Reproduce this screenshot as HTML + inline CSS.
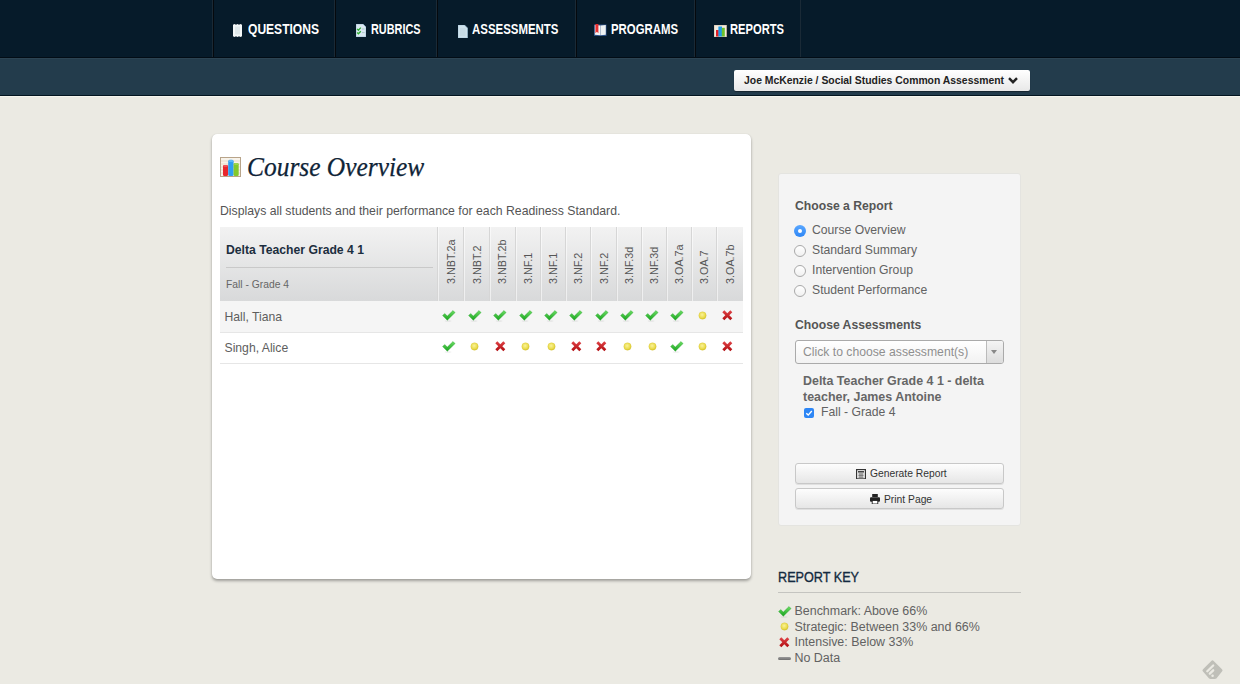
<!DOCTYPE html>
<html><head><meta charset="utf-8">
<style>
*{box-sizing:border-box;margin:0;padding:0}
html,body{width:1240px;height:684px;overflow:hidden}
body{background:#ebeae3;font-family:"Liberation Sans",sans-serif;position:relative;color:#666}
.a{position:absolute;white-space:nowrap}
svg{display:block}
#nav{position:absolute;left:0;top:0;width:1240px;height:58px;background:#061b2a;border-bottom:1px solid #020d16}
#sub{position:absolute;left:0;top:58px;width:1240px;height:39px;background:#233c4c;border-top:1px solid #2c4453;border-bottom:1px solid #f6f6ee;box-shadow:inset 0 -1px 0 #031520}
.sep{position:absolute;top:0;width:2px;height:57px;border-left:1px solid #1a2a36;border-right:1px solid #05090d}
.nt{position:absolute;top:21px;font-weight:bold;font-size:14px;line-height:17px;color:#fff;transform-origin:0 0;white-space:nowrap}
#dd{position:absolute;left:734px;top:70px;width:296px;height:21px;border-radius:2px;background:linear-gradient(#ffffff,#e8e8e8);box-shadow:0 1px 1px rgba(0,0,0,.4)}
#main{position:absolute;left:212px;top:134px;width:539px;height:445px;background:#fff;border-radius:5px;box-shadow:0 2px 3px rgba(0,0,0,.32),0 0 1px rgba(0,0,0,.15)}
#right{position:absolute;left:778px;top:173px;width:243px;height:353px;background:#f4f4f4;border:1px solid #e4e4e0;border-radius:3px}
.th{position:absolute;left:220px;top:227px;width:523px;height:74px;background:linear-gradient(#f2f2f2,#d8d9da)}
.vs{position:absolute;top:227px;width:2px;height:74px;border-left:1px solid #d6d6d6;border-right:1px solid rgba(255,255,255,.55)}
.ch{position:absolute;font-size:10.8px;line-height:12px;color:#555;transform-origin:0 0;transform:rotate(-90deg)}
.r1{position:absolute;left:220px;top:301px;width:523px;height:32px;background:#f5f5f5;border-bottom:1px solid #e6e6e6}
.r2{position:absolute;left:220px;top:333px;width:523px;height:31px;background:#fff;border-bottom:1px solid #e6e6e6}
.ic{position:absolute}
.lbl{font-size:12.2px;line-height:14px;color:#626262}
.btn{position:absolute;left:795px;width:209px;height:21px;border:1px solid #c8c8c8;border-radius:3px;background:linear-gradient(#fdfdfd,#e6e6e6);box-shadow:0 1px 0 rgba(0,0,0,.08)}
</style></head><body>
<div id="nav">
  <div class="sep" style="left:212px"></div>
  <div class="sep" style="left:334px"></div>
  <div class="sep" style="left:436px"></div>
  <div class="sep" style="left:575px"></div>
  <div class="sep" style="left:694px"></div>
  <div class="sep" style="left:800px;width:1px;border-right:0"></div>
  <div class="nt" style="left:248px;transform:scaleX(.861)">QUESTIONS</div>
  <div class="nt" style="left:371px;transform:scaleX(.776)">RUBRICS</div>
  <div class="nt" style="left:472px;transform:scaleX(.817)">ASSESSMENTS</div>
  <div class="nt" style="left:611px;transform:scaleX(.8125)">PROGRAMS</div>
  <div class="nt" style="left:730px;transform:scaleX(.798)">REPORTS</div>
</div>
<div id="sub"></div>
<div id="dd"></div>
<div class="a" style="left:744px;top:74px;font-size:10.4px;line-height:14px;font-weight:bold;color:#222">Joe McKenzie / Social Studies Common Assessment</div>
<div id="main"></div>
<div class="a" style="left:246.5px;top:152px;font-family:'Liberation Serif',serif;font-style:italic;font-size:27px;line-height:30px;color:#0f2437;transform-origin:0 0;transform:scaleX(.942);-webkit-text-stroke:.25px #0f2437">Course Overview</div>
<div class="a" style="left:220px;top:204px;font-size:12.25px;line-height:15px;color:#555">Displays all students and their performance for each Readiness Standard.</div>
<div class="th"></div>

<div class="vs" style="left:437px"></div>
<div class="vs" style="left:463px"></div>
<div class="vs" style="left:489px"></div>
<div class="vs" style="left:515px"></div>
<div class="vs" style="left:540px"></div>
<div class="vs" style="left:565px"></div>
<div class="vs" style="left:590px"></div>
<div class="vs" style="left:616px"></div>
<div class="vs" style="left:641px"></div>
<div class="vs" style="left:666px"></div>
<div class="vs" style="left:691px"></div>
<div class="vs" style="left:716px"></div>
<div class="a" style="left:226px;top:267px;width:207px;height:1px;background:#c9c9c9"></div>
<div class="a" style="left:226px;top:243px;font-size:12.2px;line-height:15px;font-weight:bold;color:#1c2e3e">Delta Teacher Grade 4 1</div>
<div class="a" style="left:226px;top:278px;font-size:10.3px;line-height:13px;color:#666">Fall - Grade 4</div>
<div class="ch" style="left:444.6px;top:284px">3.NBT.2a</div>
<div class="ch" style="left:470.6px;top:284px">3.NBT.2</div>
<div class="ch" style="left:496.3px;top:284px">3.NBT.2b</div>
<div class="ch" style="left:521.9px;top:284px">3.NF.1</div>
<div class="ch" style="left:547.0px;top:284px">3.NF.1</div>
<div class="ch" style="left:572.0px;top:284px">3.NF.2</div>
<div class="ch" style="left:597.5px;top:284px">3.NF.2</div>
<div class="ch" style="left:623.0px;top:284px">3.NF.3d</div>
<div class="ch" style="left:648.0px;top:284px">3.NF.3d</div>
<div class="ch" style="left:673.0px;top:284px">3.OA.7a</div>
<div class="ch" style="left:698.1px;top:284px">3.OA.7</div>
<div class="ch" style="left:723.7px;top:284px">3.OA.7b</div>
<div class="r1"></div><div class="r2"></div>
<div class="a lbl" style="left:224.5px;top:310px;font-size:12.2px;color:#5e5e5e">Hall, Tiana</div>
<div class="a lbl" style="left:224.5px;top:341px;font-size:12.2px;color:#5e5e5e">Singh, Alice</div>
<div class="ic" style="left:441.6px;top:310px"><svg width="14" height="12" viewBox="0 0 14 12"><defs><linearGradient id="gc" x1="0" y1="0" x2="0" y2="1"><stop offset="0" stop-color="#6ede66"/><stop offset="1" stop-color="#16a21c"/></linearGradient></defs><ellipse cx="6" cy="11" rx="3.5" ry="0.8" fill="rgba(0,0,0,.07)"/><path d="M0.6 5.6 L2.7 3.5 L5.3 6.1 L11 0.5 L13.1 2.6 L5.3 10.3 Z" fill="url(#gc)" stroke="#1a9c20" stroke-width=".35" stroke-linejoin="round"/></svg></div>
<div class="ic" style="left:467.6px;top:310px"><svg width="14" height="12" viewBox="0 0 14 12"><defs><linearGradient id="gc" x1="0" y1="0" x2="0" y2="1"><stop offset="0" stop-color="#6ede66"/><stop offset="1" stop-color="#16a21c"/></linearGradient></defs><ellipse cx="6" cy="11" rx="3.5" ry="0.8" fill="rgba(0,0,0,.07)"/><path d="M0.6 5.6 L2.7 3.5 L5.3 6.1 L11 0.5 L13.1 2.6 L5.3 10.3 Z" fill="url(#gc)" stroke="#1a9c20" stroke-width=".35" stroke-linejoin="round"/></svg></div>
<div class="ic" style="left:493.3px;top:310px"><svg width="14" height="12" viewBox="0 0 14 12"><defs><linearGradient id="gc" x1="0" y1="0" x2="0" y2="1"><stop offset="0" stop-color="#6ede66"/><stop offset="1" stop-color="#16a21c"/></linearGradient></defs><ellipse cx="6" cy="11" rx="3.5" ry="0.8" fill="rgba(0,0,0,.07)"/><path d="M0.6 5.6 L2.7 3.5 L5.3 6.1 L11 0.5 L13.1 2.6 L5.3 10.3 Z" fill="url(#gc)" stroke="#1a9c20" stroke-width=".35" stroke-linejoin="round"/></svg></div>
<div class="ic" style="left:518.9px;top:310px"><svg width="14" height="12" viewBox="0 0 14 12"><defs><linearGradient id="gc" x1="0" y1="0" x2="0" y2="1"><stop offset="0" stop-color="#6ede66"/><stop offset="1" stop-color="#16a21c"/></linearGradient></defs><ellipse cx="6" cy="11" rx="3.5" ry="0.8" fill="rgba(0,0,0,.07)"/><path d="M0.6 5.6 L2.7 3.5 L5.3 6.1 L11 0.5 L13.1 2.6 L5.3 10.3 Z" fill="url(#gc)" stroke="#1a9c20" stroke-width=".35" stroke-linejoin="round"/></svg></div>
<div class="ic" style="left:544.0px;top:310px"><svg width="14" height="12" viewBox="0 0 14 12"><defs><linearGradient id="gc" x1="0" y1="0" x2="0" y2="1"><stop offset="0" stop-color="#6ede66"/><stop offset="1" stop-color="#16a21c"/></linearGradient></defs><ellipse cx="6" cy="11" rx="3.5" ry="0.8" fill="rgba(0,0,0,.07)"/><path d="M0.6 5.6 L2.7 3.5 L5.3 6.1 L11 0.5 L13.1 2.6 L5.3 10.3 Z" fill="url(#gc)" stroke="#1a9c20" stroke-width=".35" stroke-linejoin="round"/></svg></div>
<div class="ic" style="left:569.0px;top:310px"><svg width="14" height="12" viewBox="0 0 14 12"><defs><linearGradient id="gc" x1="0" y1="0" x2="0" y2="1"><stop offset="0" stop-color="#6ede66"/><stop offset="1" stop-color="#16a21c"/></linearGradient></defs><ellipse cx="6" cy="11" rx="3.5" ry="0.8" fill="rgba(0,0,0,.07)"/><path d="M0.6 5.6 L2.7 3.5 L5.3 6.1 L11 0.5 L13.1 2.6 L5.3 10.3 Z" fill="url(#gc)" stroke="#1a9c20" stroke-width=".35" stroke-linejoin="round"/></svg></div>
<div class="ic" style="left:594.5px;top:310px"><svg width="14" height="12" viewBox="0 0 14 12"><defs><linearGradient id="gc" x1="0" y1="0" x2="0" y2="1"><stop offset="0" stop-color="#6ede66"/><stop offset="1" stop-color="#16a21c"/></linearGradient></defs><ellipse cx="6" cy="11" rx="3.5" ry="0.8" fill="rgba(0,0,0,.07)"/><path d="M0.6 5.6 L2.7 3.5 L5.3 6.1 L11 0.5 L13.1 2.6 L5.3 10.3 Z" fill="url(#gc)" stroke="#1a9c20" stroke-width=".35" stroke-linejoin="round"/></svg></div>
<div class="ic" style="left:620.0px;top:310px"><svg width="14" height="12" viewBox="0 0 14 12"><defs><linearGradient id="gc" x1="0" y1="0" x2="0" y2="1"><stop offset="0" stop-color="#6ede66"/><stop offset="1" stop-color="#16a21c"/></linearGradient></defs><ellipse cx="6" cy="11" rx="3.5" ry="0.8" fill="rgba(0,0,0,.07)"/><path d="M0.6 5.6 L2.7 3.5 L5.3 6.1 L11 0.5 L13.1 2.6 L5.3 10.3 Z" fill="url(#gc)" stroke="#1a9c20" stroke-width=".35" stroke-linejoin="round"/></svg></div>
<div class="ic" style="left:645.0px;top:310px"><svg width="14" height="12" viewBox="0 0 14 12"><defs><linearGradient id="gc" x1="0" y1="0" x2="0" y2="1"><stop offset="0" stop-color="#6ede66"/><stop offset="1" stop-color="#16a21c"/></linearGradient></defs><ellipse cx="6" cy="11" rx="3.5" ry="0.8" fill="rgba(0,0,0,.07)"/><path d="M0.6 5.6 L2.7 3.5 L5.3 6.1 L11 0.5 L13.1 2.6 L5.3 10.3 Z" fill="url(#gc)" stroke="#1a9c20" stroke-width=".35" stroke-linejoin="round"/></svg></div>
<div class="ic" style="left:670.0px;top:310px"><svg width="14" height="12" viewBox="0 0 14 12"><defs><linearGradient id="gc" x1="0" y1="0" x2="0" y2="1"><stop offset="0" stop-color="#6ede66"/><stop offset="1" stop-color="#16a21c"/></linearGradient></defs><ellipse cx="6" cy="11" rx="3.5" ry="0.8" fill="rgba(0,0,0,.07)"/><path d="M0.6 5.6 L2.7 3.5 L5.3 6.1 L11 0.5 L13.1 2.6 L5.3 10.3 Z" fill="url(#gc)" stroke="#1a9c20" stroke-width=".35" stroke-linejoin="round"/></svg></div>
<div class="ic" style="left:697.6px;top:310.5px"><svg width="9" height="9" viewBox="0 0 9 9"><defs><radialGradient id="gd" cx=".45" cy=".4" r=".6"><stop offset="0" stop-color="#faf29a"/><stop offset=".7" stop-color="#eadc4c"/><stop offset="1" stop-color="#d6c22a"/></radialGradient></defs><circle cx="4.5" cy="4.5" r="3.7" fill="url(#gd)" stroke="#d8c83a" stroke-width=".35"/></svg></div>
<div class="ic" style="left:722.2px;top:309.5px"><svg width="11" height="11" viewBox="0 0 11 11"><defs><linearGradient id="gx" x1="0" y1="0" x2="0" y2="1"><stop offset="0" stop-color="#e04448"/><stop offset="1" stop-color="#b00c10"/></linearGradient></defs><path d="M0.3 2.3 L2.3 0.3 L5.3 3.3 L8.3 0.3 L10.3 2.3 L7.3 5.3 L10.3 8.3 L8.3 10.3 L5.3 7.3 L2.3 10.3 L0.3 8.3 L3.3 5.3 Z" fill="url(#gx)"/></svg></div>
<div class="ic" style="left:441.6px;top:341px"><svg width="14" height="12" viewBox="0 0 14 12"><defs><linearGradient id="gc" x1="0" y1="0" x2="0" y2="1"><stop offset="0" stop-color="#6ede66"/><stop offset="1" stop-color="#16a21c"/></linearGradient></defs><ellipse cx="6" cy="11" rx="3.5" ry="0.8" fill="rgba(0,0,0,.07)"/><path d="M0.6 5.6 L2.7 3.5 L5.3 6.1 L11 0.5 L13.1 2.6 L5.3 10.3 Z" fill="url(#gc)" stroke="#1a9c20" stroke-width=".35" stroke-linejoin="round"/></svg></div>
<div class="ic" style="left:470.1px;top:341.5px"><svg width="9" height="9" viewBox="0 0 9 9"><defs><radialGradient id="gd" cx=".45" cy=".4" r=".6"><stop offset="0" stop-color="#faf29a"/><stop offset=".7" stop-color="#eadc4c"/><stop offset="1" stop-color="#d6c22a"/></radialGradient></defs><circle cx="4.5" cy="4.5" r="3.7" fill="url(#gd)" stroke="#d8c83a" stroke-width=".35"/></svg></div>
<div class="ic" style="left:494.8px;top:340.5px"><svg width="11" height="11" viewBox="0 0 11 11"><defs><linearGradient id="gx" x1="0" y1="0" x2="0" y2="1"><stop offset="0" stop-color="#e04448"/><stop offset="1" stop-color="#b00c10"/></linearGradient></defs><path d="M0.3 2.3 L2.3 0.3 L5.3 3.3 L8.3 0.3 L10.3 2.3 L7.3 5.3 L10.3 8.3 L8.3 10.3 L5.3 7.3 L2.3 10.3 L0.3 8.3 L3.3 5.3 Z" fill="url(#gx)"/></svg></div>
<div class="ic" style="left:521.4px;top:341.5px"><svg width="9" height="9" viewBox="0 0 9 9"><defs><radialGradient id="gd" cx=".45" cy=".4" r=".6"><stop offset="0" stop-color="#faf29a"/><stop offset=".7" stop-color="#eadc4c"/><stop offset="1" stop-color="#d6c22a"/></radialGradient></defs><circle cx="4.5" cy="4.5" r="3.7" fill="url(#gd)" stroke="#d8c83a" stroke-width=".35"/></svg></div>
<div class="ic" style="left:546.5px;top:341.5px"><svg width="9" height="9" viewBox="0 0 9 9"><defs><radialGradient id="gd" cx=".45" cy=".4" r=".6"><stop offset="0" stop-color="#faf29a"/><stop offset=".7" stop-color="#eadc4c"/><stop offset="1" stop-color="#d6c22a"/></radialGradient></defs><circle cx="4.5" cy="4.5" r="3.7" fill="url(#gd)" stroke="#d8c83a" stroke-width=".35"/></svg></div>
<div class="ic" style="left:570.5px;top:340.5px"><svg width="11" height="11" viewBox="0 0 11 11"><defs><linearGradient id="gx" x1="0" y1="0" x2="0" y2="1"><stop offset="0" stop-color="#e04448"/><stop offset="1" stop-color="#b00c10"/></linearGradient></defs><path d="M0.3 2.3 L2.3 0.3 L5.3 3.3 L8.3 0.3 L10.3 2.3 L7.3 5.3 L10.3 8.3 L8.3 10.3 L5.3 7.3 L2.3 10.3 L0.3 8.3 L3.3 5.3 Z" fill="url(#gx)"/></svg></div>
<div class="ic" style="left:596.0px;top:340.5px"><svg width="11" height="11" viewBox="0 0 11 11"><defs><linearGradient id="gx" x1="0" y1="0" x2="0" y2="1"><stop offset="0" stop-color="#e04448"/><stop offset="1" stop-color="#b00c10"/></linearGradient></defs><path d="M0.3 2.3 L2.3 0.3 L5.3 3.3 L8.3 0.3 L10.3 2.3 L7.3 5.3 L10.3 8.3 L8.3 10.3 L5.3 7.3 L2.3 10.3 L0.3 8.3 L3.3 5.3 Z" fill="url(#gx)"/></svg></div>
<div class="ic" style="left:622.5px;top:341.5px"><svg width="9" height="9" viewBox="0 0 9 9"><defs><radialGradient id="gd" cx=".45" cy=".4" r=".6"><stop offset="0" stop-color="#faf29a"/><stop offset=".7" stop-color="#eadc4c"/><stop offset="1" stop-color="#d6c22a"/></radialGradient></defs><circle cx="4.5" cy="4.5" r="3.7" fill="url(#gd)" stroke="#d8c83a" stroke-width=".35"/></svg></div>
<div class="ic" style="left:647.5px;top:341.5px"><svg width="9" height="9" viewBox="0 0 9 9"><defs><radialGradient id="gd" cx=".45" cy=".4" r=".6"><stop offset="0" stop-color="#faf29a"/><stop offset=".7" stop-color="#eadc4c"/><stop offset="1" stop-color="#d6c22a"/></radialGradient></defs><circle cx="4.5" cy="4.5" r="3.7" fill="url(#gd)" stroke="#d8c83a" stroke-width=".35"/></svg></div>
<div class="ic" style="left:670.0px;top:341px"><svg width="14" height="12" viewBox="0 0 14 12"><defs><linearGradient id="gc" x1="0" y1="0" x2="0" y2="1"><stop offset="0" stop-color="#6ede66"/><stop offset="1" stop-color="#16a21c"/></linearGradient></defs><ellipse cx="6" cy="11" rx="3.5" ry="0.8" fill="rgba(0,0,0,.07)"/><path d="M0.6 5.6 L2.7 3.5 L5.3 6.1 L11 0.5 L13.1 2.6 L5.3 10.3 Z" fill="url(#gc)" stroke="#1a9c20" stroke-width=".35" stroke-linejoin="round"/></svg></div>
<div class="ic" style="left:697.6px;top:341.5px"><svg width="9" height="9" viewBox="0 0 9 9"><defs><radialGradient id="gd" cx=".45" cy=".4" r=".6"><stop offset="0" stop-color="#faf29a"/><stop offset=".7" stop-color="#eadc4c"/><stop offset="1" stop-color="#d6c22a"/></radialGradient></defs><circle cx="4.5" cy="4.5" r="3.7" fill="url(#gd)" stroke="#d8c83a" stroke-width=".35"/></svg></div>
<div class="ic" style="left:722.2px;top:340.5px"><svg width="11" height="11" viewBox="0 0 11 11"><defs><linearGradient id="gx" x1="0" y1="0" x2="0" y2="1"><stop offset="0" stop-color="#e04448"/><stop offset="1" stop-color="#b00c10"/></linearGradient></defs><path d="M0.3 2.3 L2.3 0.3 L5.3 3.3 L8.3 0.3 L10.3 2.3 L7.3 5.3 L10.3 8.3 L8.3 10.3 L5.3 7.3 L2.3 10.3 L0.3 8.3 L3.3 5.3 Z" fill="url(#gx)"/></svg></div>
<div id="right"></div>
<div class="a" style="left:795px;top:199px;font-size:12.2px;line-height:15px;font-weight:bold;color:#555">Choose a Report</div>
<div class="a" style="left:794px;top:225px;width:12px;height:12px;border-radius:50%;background:linear-gradient(#5aa7ff,#2d86f5)"><div style="position:absolute;left:4px;top:4px;width:4px;height:4px;border-radius:50%;background:#fff"></div></div>
<div class="a lbl" style="left:812px;top:223px">Course Overview</div>
<div class="a" style="left:794px;top:245px;width:12px;height:12px;border-radius:50%;border:1px solid #a9a9a9;background:linear-gradient(#fff,#f0f0f0)"></div>
<div class="a lbl" style="left:812px;top:243px">Standard Summary</div>
<div class="a" style="left:794px;top:265px;width:12px;height:12px;border-radius:50%;border:1px solid #a9a9a9;background:linear-gradient(#fff,#f0f0f0)"></div>
<div class="a lbl" style="left:812px;top:263px">Intervention Group</div>
<div class="a" style="left:794px;top:285px;width:12px;height:12px;border-radius:50%;border:1px solid #a9a9a9;background:linear-gradient(#fff,#f0f0f0)"></div>
<div class="a lbl" style="left:812px;top:283px">Student Performance</div>
<div class="a" style="left:795px;top:317.5px;font-size:12.2px;line-height:15px;font-weight:bold;color:#555">Choose Assessments</div>
<div class="a" style="left:795px;top:340px;width:209px;height:24px;border:1px solid #aaa;border-radius:3px;background:linear-gradient(#fff,#f2f2f2)"></div>
<div class="a" style="left:986px;top:341px;width:17px;height:22px;border-left:1px solid #bbb;background:linear-gradient(#f4f4f4,#dcdcdc);border-radius:0 2px 2px 0"></div>
<div class="a" style="left:991px;top:350px;width:0;height:0;border-left:3.5px solid transparent;border-right:3.5px solid transparent;border-top:4px solid #888"></div>
<div class="a" style="left:803px;top:345px;font-size:12.2px;line-height:15px;color:#8f8f8f">Click to choose assessment(s)</div>
<div class="a" style="left:803px;top:374px;font-size:12.45px;line-height:15.5px;font-weight:bold;color:#666;white-space:normal;width:200px">Delta Teacher Grade 4 1 - delta teacher, James Antoine</div>
<div class="a" style="left:804px;top:408px;width:10px;height:10px;border-radius:2px;background:#2d86f5"><svg width="10" height="10" viewBox="0 0 10 10"><path d="M2.3 5.2 L4.2 7.1 L7.8 3" fill="none" stroke="#fff" stroke-width="1.4"/></svg></div>
<div class="a lbl" style="left:821px;top:405px">Fall - Grade 4</div>
<div class="btn" style="top:463px"></div><div class="btn" style="top:488px"></div>
<div class="a" style="left:870px;top:468px;font-size:10.3px;line-height:12px;color:#333">Generate Report</div>
<div class="a" style="left:884px;top:493.5px;font-size:10.3px;line-height:12px;color:#333">Print Page</div>
<div class="a" style="left:778px;top:569px;font-size:14.5px;line-height:17px;font-weight:normal;color:#142a40;-webkit-text-stroke:.35px #142a40;transform-origin:0 0;transform:scaleX(.872)">REPORT KEY</div>
<div class="a" style="left:778px;top:592px;width:243px;height:1px;background:#c4c4c0"></div>
<div class="a lbl" style="left:794.5px;top:603.80px;font-size:12.45px">Benchmark: Above 66%</div>
<div class="a lbl" style="left:794.5px;top:619.55px;font-size:12.45px">Strategic: Between 33% and 66%</div>
<div class="a lbl" style="left:794.5px;top:635.30px;font-size:12.45px">Intensive: Below 33%</div>
<div class="a lbl" style="left:794.5px;top:651.05px;font-size:12.45px">No Data</div>
<div class="ic" style="left:777.5px;top:605.5px"><svg width="14" height="12" viewBox="0 0 14 12"><defs><linearGradient id="gc" x1="0" y1="0" x2="0" y2="1"><stop offset="0" stop-color="#6ede66"/><stop offset="1" stop-color="#16a21c"/></linearGradient></defs><ellipse cx="6" cy="11" rx="3.5" ry="0.8" fill="rgba(0,0,0,.07)"/><path d="M0.6 5.6 L2.7 3.5 L5.3 6.1 L11 0.5 L13.1 2.6 L5.3 10.3 Z" fill="url(#gc)" stroke="#1a9c20" stroke-width=".35" stroke-linejoin="round"/></svg></div>
<div class="ic" style="left:779.5px;top:622px"><svg width="9" height="9" viewBox="0 0 9 9"><defs><radialGradient id="gd" cx=".45" cy=".4" r=".6"><stop offset="0" stop-color="#faf29a"/><stop offset=".7" stop-color="#eadc4c"/><stop offset="1" stop-color="#d6c22a"/></radialGradient></defs><circle cx="4.5" cy="4.5" r="3.7" fill="url(#gd)" stroke="#d8c83a" stroke-width=".35"/></svg></div>
<div class="ic" style="left:779px;top:637px"><svg width="11" height="11" viewBox="0 0 11 11"><defs><linearGradient id="gx" x1="0" y1="0" x2="0" y2="1"><stop offset="0" stop-color="#e04448"/><stop offset="1" stop-color="#b00c10"/></linearGradient></defs><path d="M0.3 2.3 L2.3 0.3 L5.3 3.3 L8.3 0.3 L10.3 2.3 L7.3 5.3 L10.3 8.3 L8.3 10.3 L5.3 7.3 L2.3 10.3 L0.3 8.3 L3.3 5.3 Z" fill="url(#gx)"/></svg></div>
<div class="a" style="left:778px;top:656.5px;width:13px;height:3.5px;background:linear-gradient(#9a9a9a,#6f6f6f);border-radius:1.5px"></div>
<div class="a" style="left:233px;top:24px"><svg width="9" height="13" viewBox="0 0 9 13"><path d="M0 0.8 L1.5 0 L3 0.8 L4.5 0 L6 0.8 L7.5 0 L9 0.8 L9 12.2 L7.5 13 L6 12.2 L4.5 13 L3 12.2 L1.5 13 L0 12.2 Z" fill="#f4f8f8"/><rect x="2" y="2.5" width="5" height="8" fill="#e0e9eb"/></svg></div>
<div class="a" style="left:356px;top:24px"><svg width="10" height="13" viewBox="0 0 10 13"><path d="M0 0 L7 0 L10 3 L10 13 L0 13 Z" fill="#dbe9f2" stroke="#8fb3cc" stroke-width=".6"/><path d="M1.1 4.9 L2.4 6.2 L4.8 3.6" fill="none" stroke="#2fae32" stroke-width="1.3"/><path d="M1.1 8.5 L2.4 9.8 L4.8 7.2" fill="none" stroke="#2fae32" stroke-width="1.3"/><path d="M6 5 H8.6 M6 8.6 H8.6" stroke="#9bb" stroke-width=".7"/></svg></div>
<div class="a" style="left:458px;top:24.5px"><svg width="9.5" height="13" viewBox="0 0 9.5 13"><path d="M0 0 L6.5 0 L9.5 3 L9.5 13 L0 13 Z" fill="#cfe2ec" stroke="#9fc4da" stroke-width=".6"/><path d="M2 4 H7.5 M2 6 H7.5 M2 8 H7.5 M2 10 H7.5" stroke="#b5ccd6" stroke-width=".6"/></svg></div>
<div class="a" style="left:594px;top:24px"><svg width="13" height="12" viewBox="0 0 13 12"><rect x="0" y="0.5" width="12.5" height="11.5" fill="#2a4f86"/><path d="M0.8 1 L6.2 1.5 L6.2 11.2 L0.8 10.8 Z" fill="#f4f4f4"/><path d="M6.4 1.5 L11.8 1 L11.8 10.8 L6.4 11.2 Z" fill="#eef2f2"/><path d="M1.4 0 L4.4 0 L4.4 9.2 L2.9 7.8 L1.4 9.2 Z" fill="#e52f30"/></svg></div>
<div class="a" style="left:714px;top:24.5px"><svg width="12.5" height="12" viewBox="0 0 12.5 12"><rect x="0" y="0" width="12.5" height="12" fill="#f3ece0" stroke="#c9b59a" stroke-width=".8"/><rect x="2" y="5" width="2.8" height="6.5" fill="#e11d24"/><rect x="4.4" y="1.5" width="3.6" height="10" fill="#1e9be6"/><rect x="7.8" y="2.8" width="3" height="8.7" fill="#6cc12a"/></svg></div>
<div class="a" style="left:220px;top:157px"><svg width="21" height="20" viewBox="0 0 21 20"><rect x="0.5" y="0.5" width="20" height="19" fill="#f8f3ea" stroke="#b8a48a" stroke-width="1"/><path d="M1 4 H20 M1 7 H20 M1 10 H20 M1 13 H20 M1 16 H20" stroke="#e9dcc8" stroke-width="1"/><rect x="3" y="8" width="5" height="11" rx="1.2" fill="#e8262d"/><rect x="3" y="19" width="15.6" height="0.5" fill="#b8a48a"/><rect x="8.2" y="2.8" width="5.4" height="16.2" rx="1.5" fill="#2f9ff2"/><rect x="8.8" y="3.4" width="4.2" height="1" rx=".5" fill="#8ccdff"/><rect x="13.6" y="6" width="5.1" height="13" rx="1.3" fill="#83c92c"/><rect x="3.6" y="8.6" width="3.8" height="1" rx=".5" fill="#f47a7e"/><rect x="14.2" y="6.6" width="3.9" height="1" rx=".5" fill="#b5e06c"/></svg></div>
<div class="a" style="left:1008px;top:77px"><svg width="10" height="7" viewBox="0 0 10 7"><path d="M1 1.2 L5 5.2 L9 1.2" fill="none" stroke="#222" stroke-width="2.4"/></svg></div>
<div class="a" style="left:856px;top:468.5px"><svg width="10" height="10.5" viewBox="0 0 10 10.5"><rect x=".6" y=".6" width="8.8" height="9.3" fill="#fff" stroke="#333" stroke-width="1.2"/><rect x="2" y="2" width="6" height="1.6" fill="#444"/><path d="M2.3 5 H7.7 M2.3 6.6 H7.7 M2.3 8.2 H7.7 M4 4.2 V9 M6 4.2 V9" stroke="#666" stroke-width=".8"/></svg></div>
<div class="a" style="left:870px;top:494px"><svg width="10" height="10" viewBox="0 0 10 10"><rect x="2.2" y="0" width="5.6" height="3" fill="#222"/><rect x="0" y="3.2" width="10" height="4.6" rx="1" fill="#222"/><rect x="2.2" y="6.5" width="5.6" height="3.5" fill="#fff" stroke="#222" stroke-width=".9"/></svg></div>
<div class="a" style="left:1201px;top:659px"><svg width="23" height="21" viewBox="0 0 23 21"><path d="M10.3 1.9 Q11.5 0.7 12.7 1.9 L21 10.2 Q22.2 11.4 21 12.6 L16.6 17.9 Q15.6 19.9 13.8 19.9 L9.6 19.9 Q7.9 19.9 6.8 17.9 L2 12.6 Q0.8 11.4 2 10.2 Z" fill="#bfbfb8"/><path d="M6.3 12.3 L12.2 6.5 M8.8 14.6 L12.2 11.3" stroke="#ebeae3" stroke-width="2.3" stroke-linecap="round"/><circle cx="11.6" cy="16.7" r="1.3" fill="#ebeae3"/></svg></div>
</body></html>
